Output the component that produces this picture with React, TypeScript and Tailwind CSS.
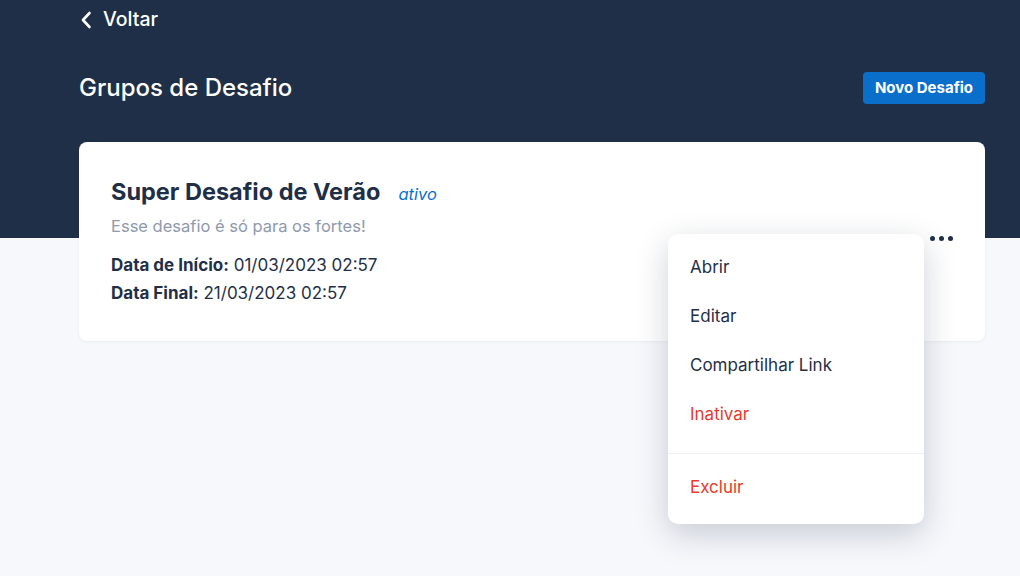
import React from 'react';

const MENU_ITEMS = [
  { label: 'Abrir', danger: false },
  { label: 'Editar', danger: false },
  { label: 'Compartilhar Link', danger: false },
  { label: 'Inativar', danger: true },
];

const ChevronLeft = () => (
  <svg width="12" height="18" viewBox="0 0 12 18" fill="none">
    <path d="M9.5 2L3 9l6.5 7" stroke="white" strokeWidth="2.6" strokeLinecap="round" strokeLinejoin="round" />
  </svg>
);

const ChallengeMenu: React.FC = () => {
  return (
    <div className="absolute left-[589px] top-[92px] w-[256px] rounded-[10px] bg-white pt-[9px] pb-[12px] shadow-[0_10px_32px_rgba(31,47,71,0.22)]">
      {MENU_ITEMS.map(item => (
        <div
          key={item.label}
          className={`flex h-[49px] items-center px-[22px] text-[17px] ${
            item.danger ? 'text-[#e9392c]' : 'text-[#1f2f47]'
          }`}
        >
          {item.label}
        </div>
      ))}
      <div className="mt-[14px] h-px bg-[#eef0f5]" />
      <div className="mt-[9px] flex h-[49px] items-center px-[22px] text-[17px] text-[#e9392c]">
        Excluir
      </div>
    </div>
  );
};

export default function App() {
  return (
    <div
      className="relative min-h-[576px] w-full overflow-hidden bg-[#f7f8fc]"
      style={{ fontFamily: 'Inter, "Noto Sans", sans-serif' }}
    >
      <div className="h-[238px] bg-[#1f2f47]">
        <div className="pl-[79px] pr-[35px]">
          <button className="flex h-[40px] items-center gap-[11px] pl-[1px] text-[19.5px] font-medium text-white">
            <ChevronLeft />
            <span>Voltar</span>
          </button>

          <div className="mt-[30px] flex items-center justify-between">
            <h1 className="text-[24px] font-medium text-white">Grupos de Desafio</h1>
            <button className="h-[32px] rounded-[4px] bg-[#0a6fcb] px-[12px] text-[15px] font-bold text-white">
              Novo Desafio
            </button>
          </div>
        </div>
      </div>

      <div className="absolute inset-x-0 top-[142px] pl-[79px] pr-[35px]">
        <div className="relative h-[199px] rounded-[8px] bg-white px-[32px] pt-[32px] shadow-[0_1px_3px_rgba(31,47,71,0.06)]">
          <div className="flex items-baseline gap-[18px]">
            <h2 className="text-[23.5px] font-bold leading-[35px] text-[#1f2f47]">Super Desafio de Verão</h2>
            <span className="text-[16.5px] italic text-[#0a6fcb]">ativo</span>
          </div>
          <p className="mt-[5px] text-[16.5px] leading-[25px] text-[#8e99ab]">Esse desafio é só para os fortes!</p>
          <div className="mt-[13px] space-y-[2px] text-[17px] leading-[26px] text-[#1f2f47]">
            <p><span className="font-bold">Data de Início:</span> 01/03/2023 02:57</p>
            <p><span className="font-bold">Data Final:</span> 21/03/2023 02:57</p>
          </div>

          <button className="absolute right-[32px] top-[90px] flex h-[12px] items-center gap-[4px]">
            <span className="h-[5px] w-[5px] rounded-full bg-[#1f2f47]" />
            <span className="h-[5px] w-[5px] rounded-full bg-[#1f2f47]" />
            <span className="h-[5px] w-[5px] rounded-full bg-[#1f2f47]" />
          </button>

          <ChallengeMenu />
        </div>
      </div>
    </div>
  );
}
